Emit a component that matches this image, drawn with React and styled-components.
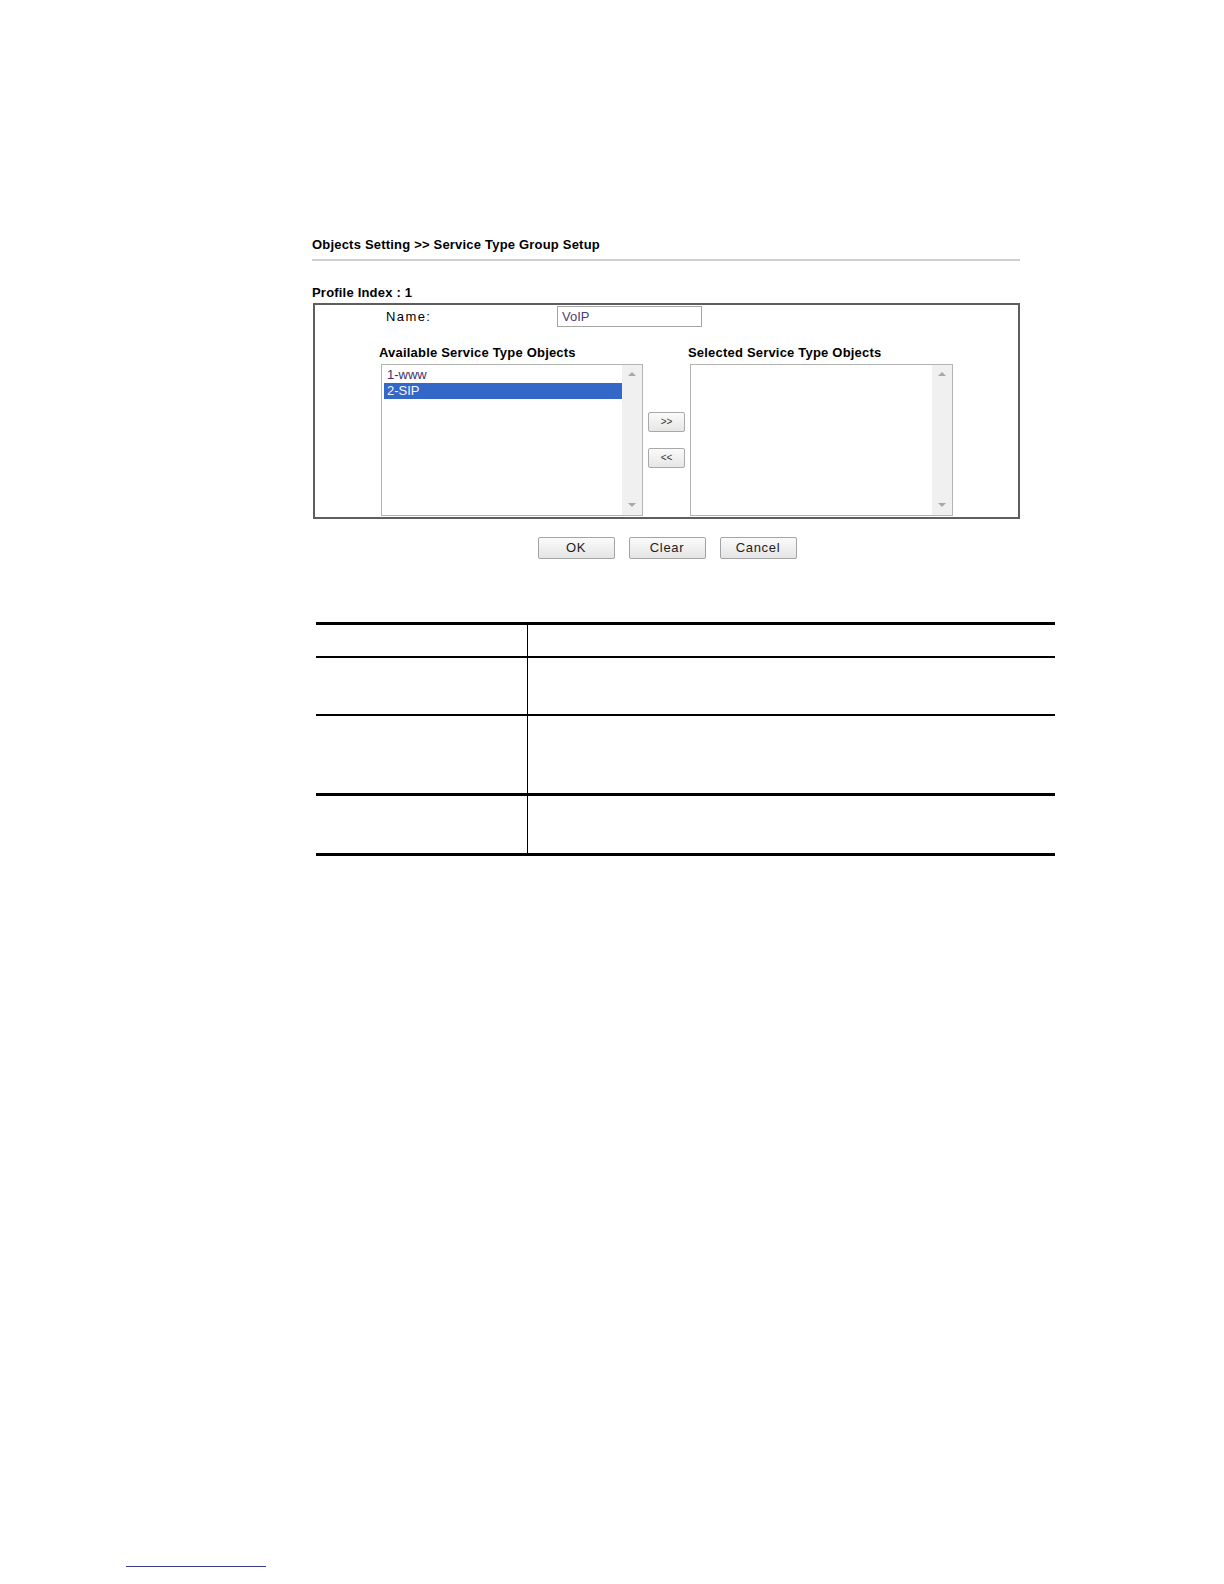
import React from "react"
import styled, { createGlobalStyle } from "styled-components"

const GlobalStyle = createGlobalStyle`
	html, body {
		margin: 0;
		padding: 0;
		background: #ffffff;
	}
	body {
		font-family: "Liberation Sans", Arial, sans-serif;
		color: #000000;
	}
`

const Page = styled.div`
	width: 1224px;
	min-height: 1584px;
	padding-top: 237px;
	box-sizing: border-box;
`

const Content = styled.div`
	margin-left: 312px;
	width: 708px;
`

const BoldText = styled.div`
	font-weight: bold;
	font-size: 13px;
	letter-spacing: 0.2px;
	line-height: 16px;
	white-space: nowrap;
`

const Title = styled(BoldText)`
	padding-bottom: 6px;
	border-bottom: 2px solid #cfcfcf;
`

const ProfileLabel = styled(BoldText)`
	margin-top: 24px;
	padding-bottom: 2px;
`

const SetupBox = styled.div`
	margin-left: 1px;
	width: 707px;
	height: 216px;
	box-sizing: border-box;
	border: 2px solid #5e5e5e;
	display: flex;
	flex-direction: column;
`

const NameRow = styled.div`
	display: flex;
	align-items: center;
	padding-left: 71px;
	margin-top: 1px;
	height: 21px;
`

const NameLabel = styled.span`
	width: 171px;
	font-size: 13px;
	letter-spacing: 1.4px;
`

const NameInput = styled.div`
	width: 145px;
	height: 21px;
	box-sizing: border-box;
	border: 1px solid #a5a5a5;
	padding-left: 4px;
	font-size: 13px;
	line-height: 19px;
	color: #4e3d78;
`

const ListsRow = styled.div`
	display: flex;
	margin-top: 18px;
	padding-left: 64px;
`

const ListColumn = styled.div`
	display: flex;
	flex-direction: column;
	width: ${(p) => p.$width}px;
`

const ListBox = styled.div`
	margin-left: 2px;
	margin-top: 3px;
	width: ${(p) => p.$width}px;
	height: 152px;
	box-sizing: border-box;
	border: 1px solid #b4b4b4;
	display: flex;
`

const Items = styled.div`
	flex: 1;
	padding: 2px 0 0 2px;
`

const Item = styled.div`
	height: 16px;
	line-height: 16px;
	font-size: 13px;
	padding-left: 3px;
	color: ${(p) => (p.$selected ? "#f4f6ff" : "#43306a")};
	background: ${(p) => (p.$selected ? "#3468c8" : "transparent")};
`

const ScrollBar = styled.div`
	width: 20px;
	background: #f0f0f0;
	display: flex;
	flex-direction: column;
	justify-content: space-between;
	align-items: center;
	padding: 7px 0 8px;
	box-sizing: border-box;
`

const Arrow = styled.div`
	width: 0;
	height: 0;
	border-left: 4px solid transparent;
	border-right: 4px solid transparent;
	${(p) =>
		p.$down
			? "border-top: 4px solid #a8a8a8;"
			: "border-bottom: 4px solid #a8a8a8;"}
`

const MoveColumn = styled.div`
	width: 45px;
	padding-top: 67px;
	padding-left: 5px;
	box-sizing: border-box;
	display: flex;
	flex-direction: column;
	gap: 16px;
`

const SmallButton = styled.div`
	width: 37px;
	height: 20px;
	box-sizing: border-box;
	border: 1px solid #a9a9a9;
	border-radius: 2px;
	background: linear-gradient(#fafafa, #e6e6e6);
	font-size: 10px;
	line-height: 18px;
	text-align: center;
	color: #333333;
`

const ButtonRow = styled.div`
	display: flex;
	justify-content: center;
	gap: 14px;
	margin-top: 18px;
	padding-left: 2px;
`

const ActionButton = styled.div`
	width: 77px;
	height: 22px;
	box-sizing: border-box;
	border: 1px solid #a3a3a3;
	border-radius: 2px;
	background: linear-gradient(#fbfbfb, #e4e4e4);
	font-size: 13px;
	letter-spacing: 0.7px;
	line-height: 20px;
	text-align: center;
	color: #222222;
`

const DescTable = styled.div`
	margin-left: 316px;
	margin-top: 63px;
	width: 739px;
	border-top: 3px solid #000000;
	border-bottom: 3px solid #000000;
`

const DescRow = styled.div`
	display: grid;
	grid-template-columns: 211px 1fr;
	height: ${(p) => p.$height}px;
	border-top: ${(p) => (p.$line ? `${p.$line}px solid #000000` : "none")};
`

const DescCell = styled.div`
	& + & {
		border-left: 1px solid #000000;
	}
`

const FootLine = styled.div`
	margin-left: 126px;
	margin-top: 710px;
	width: 140px;
	height: 1px;
	background: #3c3c8c;
`

const ListPanel = ({ title, width, items = [] }) => (
	<ListColumn $width={width + 2}>
		<BoldText>{title}</BoldText>
		<ListBox $width={width}>
			<Items>
				{items.map((it) => (
					<Item key={it.label} $selected={it.selected}>
						{it.label}
					</Item>
				))}
			</Items>
			<ScrollBar>
				<Arrow />
				<Arrow $down />
			</ScrollBar>
		</ListBox>
	</ListColumn>
)

const rows = [
	{ height: 31, line: 0 },
	{ height: 56, line: 2 },
	{ height: 77, line: 2 },
	{ height: 57, line: 3 },
]

export default function App() {
	return (
		<Page>
			<GlobalStyle />
			<Content>
				<Title>Objects Setting &gt;&gt; Service Type Group Setup</Title>
				<ProfileLabel>Profile Index : 1</ProfileLabel>
				<SetupBox>
					<NameRow>
						<NameLabel>Name:</NameLabel>
						<NameInput>VoIP</NameInput>
					</NameRow>
					<ListsRow>
						<ListPanel
							title="Available Service Type Objects"
							width={262}
							items={[
								{ label: "1-www" },
								{ label: "2-SIP", selected: true },
							]}
						/>
						<MoveColumn>
							<SmallButton>&gt;&gt;</SmallButton>
							<SmallButton>&lt;&lt;</SmallButton>
						</MoveColumn>
						<ListPanel title="Selected Service Type Objects" width={263} />
					</ListsRow>
				</SetupBox>
				<ButtonRow>
					<ActionButton>OK</ActionButton>
					<ActionButton>Clear</ActionButton>
					<ActionButton>Cancel</ActionButton>
				</ButtonRow>
			</Content>
			<DescTable>
				{rows.map((r, i) => (
					<DescRow key={i} $height={r.height} $line={r.line}>
						<DescCell />
						<DescCell />
					</DescRow>
				))}
			</DescTable>
			<FootLine />
		</Page>
	)
}
